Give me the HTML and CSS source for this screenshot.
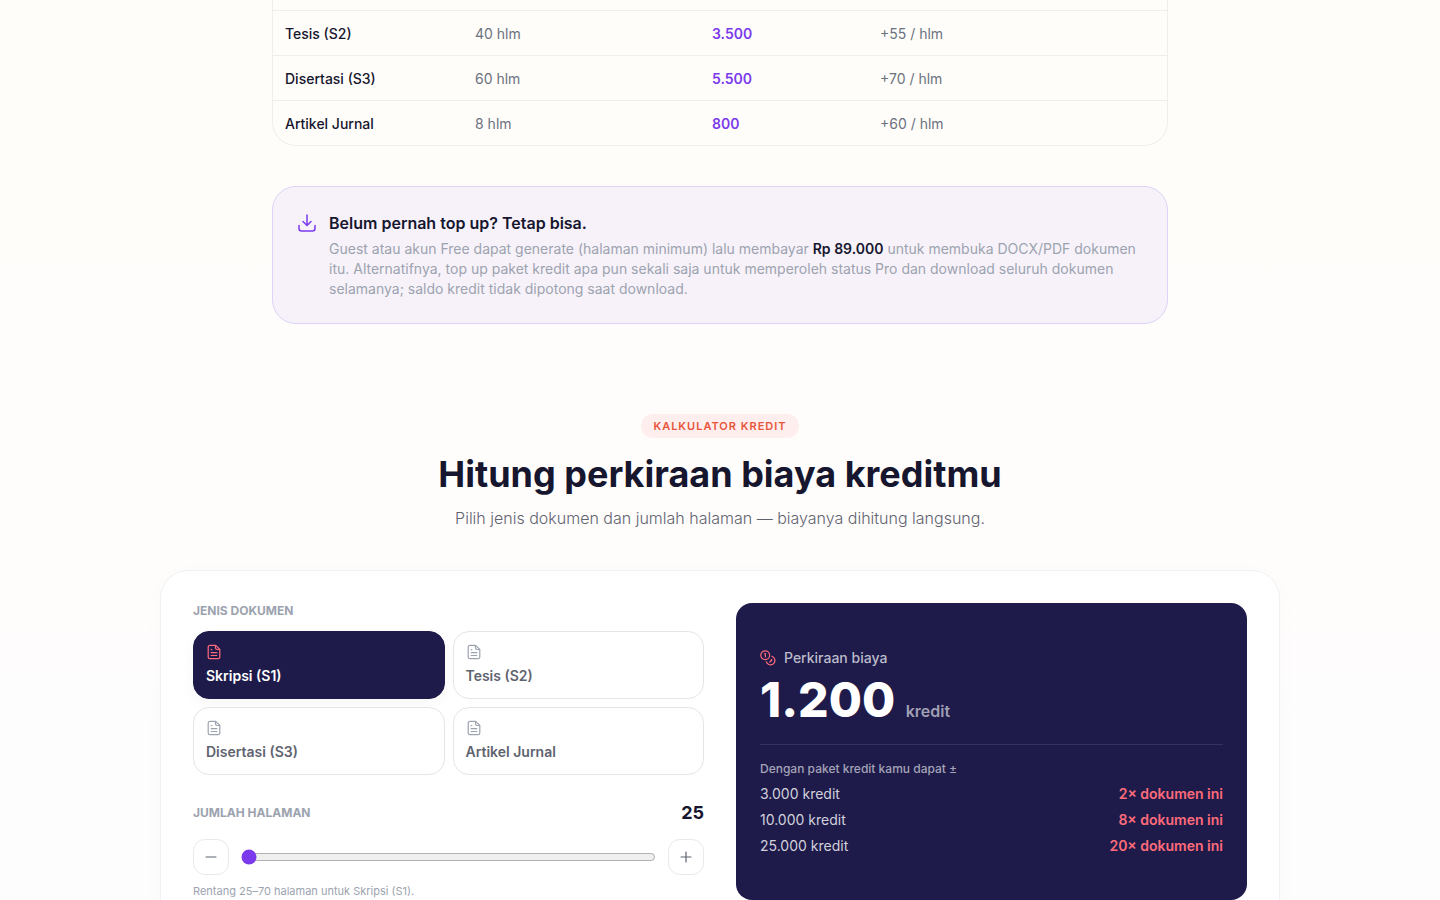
FILE: index.html
```html
<!DOCTYPE html>
<html lang="id">
<head>
    <meta charset="UTF-8">
    <meta name="viewport" content="width=device-width, initial-scale=1.0">
    <title>Kalkulator Kredit</title>
    <link rel="stylesheet" href="styles.css">
</head>
<body>
    <!-- Ikon yang dipakai berulang -->
    <svg class="sprite" aria-hidden="true">
        <symbol id="icon-doc" viewBox="0 0 16 16">
            <path d="M9.700 1.300H4a1.800 1.800 0 0 0-1.800 1.800v9.800A1.800 1.800 0 0 0 4 14.700h8a1.800 1.800 0 0 0 1.800-1.800V5.400z" />
            <path d="M9.500 1.500v2.300a1.700 1.700 0 0 0 1.700 1.700h2.300M5.200 5.700h.6M5.200 8.700h5.600M5.200 11.500h5.600" />
        </symbol>
    </svg>

    <main>
        <section class="pricing">
            <div class="table-wrap">
                <table>
                    <colgroup>
                        <col class="col-jenis">
                        <col class="col-min">
                        <col class="col-kredit">
                        <col>
                    </colgroup>
                    <tbody>
                        <tr>
                            <th scope="row">Tesis (S2)</th>
                            <td>40 hlm</td>
                            <td class="kredit">3.500</td>
                            <td>+55 / hlm</td>
                        </tr>
                        <tr>
                            <th scope="row">Disertasi (S3)</th>
                            <td>60 hlm</td>
                            <td class="kredit">5.500</td>
                            <td>+70 / hlm</td>
                        </tr>
                        <tr>
                            <th scope="row">Artikel Jurnal</th>
                            <td>8 hlm</td>
                            <td class="kredit">800</td>
                            <td>+60 / hlm</td>
                        </tr>
                    </tbody>
                </table>
            </div>

            <div class="callout">
                <svg class="callout-icon" viewBox="0 0 20 20" aria-hidden="true">
                    <path d="M10 2v10M6 8.500l4 4 4-4M2 12.500v3A2.500 2.500 0 0 0 4.500 18h11a2.500 2.500 0 0 0 2.500-2.500v-3" />
                </svg>
                <div>
                    <h3>Belum pernah top up? Tetap bisa.</h3>
                    <p>Guest atau akun Free dapat generate (halaman minimum) lalu membayar <strong>Rp 89.000</strong> untuk membuka DOCX/PDF dokumen itu. Alternatifnya, top up paket kredit apa pun sekali saja untuk memperoleh status Pro dan download seluruh dokumen selamanya; saldo kredit tidak dipotong saat download.</p>
                </div>
            </div>
        </section>

        <section class="calculator">
            <div class="heading">
                <span class="badge">KALKULATOR KREDIT</span>
                <h2>Hitung perkiraan biaya kreditmu</h2>
                <p>Pilih jenis dokumen dan jumlah halaman — biayanya dihitung langsung.</p>
            </div>

            <div class="card">
                <div class="form">
                    <p class="label" id="label-jenis">JENIS DOKUMEN</p>
                    <div class="types" role="group" aria-labelledby="label-jenis">
                        <button type="button" class="type active" aria-pressed="true">
                            <svg class="icon"><use href="#icon-doc" /></svg>
                            Skripsi (S1)
                        </button>
                        <button type="button" class="type" aria-pressed="false">
                            <svg class="icon"><use href="#icon-doc" /></svg>
                            Tesis (S2)
                        </button>
                        <button type="button" class="type" aria-pressed="false">
                            <svg class="icon"><use href="#icon-doc" /></svg>
                            Disertasi (S3)
                        </button>
                        <button type="button" class="type" aria-pressed="false">
                            <svg class="icon"><use href="#icon-doc" /></svg>
                            Artikel Jurnal
                        </button>
                    </div>

                    <div class="pages-head">
                        <label class="label" for="halaman">JUMLAH HALAMAN</label>
                        <output for="halaman">25</output>
                    </div>
                    <div class="pages">
                        <button type="button" class="step" aria-label="Kurangi halaman">
                            <svg class="icon" viewBox="0 0 16 16"><path d="M3 8h10" /></svg>
                        </button>
                        <input type="range" id="halaman" min="25" max="70" value="25">
                        <button type="button" class="step" aria-label="Tambah halaman">
                            <svg class="icon" viewBox="0 0 16 16"><path d="M3 8h10M8 3v10" /></svg>
                        </button>
                    </div>
                    <p class="hint">Rentang 25–70 halaman untuk Skripsi (S1).</p>
                </div>

                <div class="result">
                    <p class="result-title">
                        <svg class="icon" viewBox="0 0 16 16" aria-hidden="true">
                            <circle cx="5.200" cy="5.200" r="4.400" />
                            <path d="M4.600 3.700h.8v3.100M11.800 6.300a4.400 4.400 0 1 1-5.500 5.500M11.200 9.300l.7.700-2 2" />
                        </svg>
                        Perkiraan biaya
                    </p>
                    <p class="total">1.200 <span>kredit</span></p>
                    <div class="packages">
                        <p>Dengan paket kredit kamu dapat ±</p>
                        <dl>
                            <div><dt>3.000 kredit</dt><dd>2× dokumen ini</dd></div>
                            <div><dt>10.000 kredit</dt><dd>8× dokumen ini</dd></div>
                            <div><dt>25.000 kredit</dt><dd>20× dokumen ini</dd></div>
                        </dl>
                    </div>
                </div>
            </div>
        </section>
    </main>
</body>
</html>
```
FILE: styles.css
```css
* {
    box-sizing: border-box;
}

body {
    margin: 0;
    height: 100vh;
    overflow: hidden;
    font-family: Inter, "Liberation Sans", sans-serif;
    font-size: 14px;
    line-height: 20px;
    color: #16162e;
    background: linear-gradient(#fffdf9, #fffdfc 60%, #fdfdfe);
}

h2,
h3,
p,
dl,
dd {
    margin: 0;
}

button {
    font: inherit;
    cursor: pointer;
}

.sprite {
    display: none;
}

.icon {
    display: block;
    width: 16px;
    height: 16px;
    fill: none;
    stroke: currentColor;
    stroke-width: 1.2;
    stroke-linecap: round;
    stroke-linejoin: round;
}

/* Tabel harga */
.pricing {
    max-width: 896px;
    margin: 0 auto;
}

.table-wrap {
    padding-top: 10px;
    border: 1px solid #f0eeed;
    border-top: none;
    border-radius: 0 0 24px 24px;
}

table {
    width: 100%;
    table-layout: fixed;
    border-collapse: collapse;
}

.col-jenis {
    width: 190px;
}

.col-min {
    width: 237px;
}

.col-kredit {
    width: 168px;
}

th,
td {
    padding: 13px 12px 11px;
    text-align: left;
    border-top: 1px solid #f0eeed;
}

th {
    font-weight: 500;
}

td {
    color: #6b7280;
}

.kredit {
    font-weight: 600;
    color: #7c3aed;
}

.callout {
    display: flex;
    gap: 12px;
    margin-top: 40px;
    padding: 24px;
    border: 1px solid #dcd3f6;
    border-radius: 24px;
    background: #f7f2fa;
}

.callout-icon {
    flex: none;
    width: 20px;
    height: 20px;
    margin-top: 2px;
    fill: none;
    stroke: #7c3aed;
    stroke-width: 1.5;
    stroke-linecap: round;
    stroke-linejoin: round;
}

.callout h3 {
    margin-bottom: 4px;
    font-size: 16px;
    line-height: 24px;
    font-weight: 600;
}

.callout p {
    color: #9ca3af;
}

.callout strong {
    font-weight: 600;
    color: #16162e;
}

/* Kalkulator */
.calculator {
    max-width: 1120px;
    margin: 90px auto 0;
}

.heading {
    display: flex;
    flex-direction: column;
    align-items: center;
    text-align: center;
}

.badge {
    padding: 4px 12px;
    border-radius: 12px;
    font-size: 11px;
    line-height: 16px;
    font-weight: 600;
    letter-spacing: 1px;
    color: #e8553a;
    background: #ffeeee;
}

.heading h2 {
    margin-top: 12px;
    font-size: 36px;
    line-height: 48px;
    font-weight: 700;
}

.heading p {
    margin-top: 8px;
    font-size: 16px;
    line-height: 24px;
    font-weight: 300;
    color: #5f6370;
}

.card {
    display: grid;
    grid-template-columns: 1fr 1fr;
    gap: 32px;
    margin-top: 40px;
    padding: 32px;
    border: 1px solid #f1f0f2;
    border-radius: 28px;
    background: #fff;
    box-shadow: 0 4px 24px rgba(30, 27, 75, 0.02);
}

.label {
    font-size: 12px;
    line-height: 16px;
    font-weight: 700;
    color: #9ca3af;
}

.types {
    display: grid;
    grid-template-columns: 1fr 1fr;
    gap: 8px;
    margin-top: 12px;
}

.type {
    display: flex;
    flex-direction: column;
    gap: 6px;
    padding: 12px;
    border: 1px solid #e5e5e9;
    border-radius: 16px;
    font-weight: 600;
    text-align: left;
    color: #5f6370;
    background: #fff;
}

.type .icon {
    color: #9ca3af;
}

.type.active {
    border-color: #1e1b4b;
    color: #fff;
    background: #1e1b4b;
    box-shadow: 0 4px 16px rgba(30, 27, 75, 0.04);
}

.type.active .icon {
    color: #ff6b7a;
}

.pages-head {
    display: flex;
    align-items: center;
    justify-content: space-between;
    margin-top: 24px;
}

.pages-head output {
    font-size: 18px;
    line-height: 28px;
    font-weight: 700;
}

.pages {
    display: flex;
    align-items: center;
    gap: 12px;
    margin-top: 12px;
}

.step {
    display: flex;
    align-items: center;
    justify-content: center;
    flex: none;
    width: 36px;
    height: 36px;
    padding: 0;
    border: 1px solid #e9e9ec;
    border-radius: 12px;
    color: #5f6370;
    background: #fff;
}

input[type="range"] {
    flex: 1;
    min-width: 0;
    margin: 0;
    accent-color: #7c3aed;
}

.hint {
    margin-top: 8px;
    font-size: 11px;
    line-height: 17px;
    color: #9ca3af;
}

.result {
    display: flex;
    flex-direction: column;
    justify-content: center;
    padding: 24px;
    border-radius: 16px;
    color: #fff;
    background: #1e1b4b;
}

.result-title {
    display: flex;
    align-items: center;
    gap: 8px;
    font-weight: 500;
    color: #bbbac9;
}

.result-title .icon {
    color: #ff6b7a;
}

.total {
    margin-top: 8px;
    font-size: 48px;
    line-height: 48px;
    font-weight: 800;
}

.total span {
    font-size: 16px;
    line-height: 20px;
    font-weight: 600;
    color: #a09fb3;
}

.packages {
    margin-top: 20px;
    padding-top: 16px;
    border-top: 1px solid #353260;
}

.packages p {
    font-size: 12px;
    line-height: 16px;
    font-weight: 500;
    color: #a5a4b7;
}

.packages dl {
    display: grid;
    gap: 6px;
    margin-top: 7px;
}

.packages dl div {
    display: flex;
    justify-content: space-between;
}

.packages dt {
    color: #d2d1db;
}

.packages dd {
    font-weight: 600;
    color: #ff6b7a;
}
```
